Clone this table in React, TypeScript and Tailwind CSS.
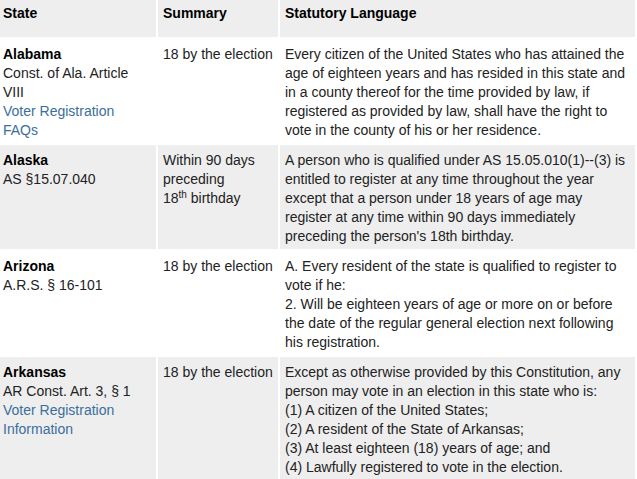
import React from "react";

type Row = {
  state: string;
  cites: string[];
  links: string[];
  summary: React.ReactNode;
  language: string[];
  shaded: boolean;
};

const rows: Row[] = [
  {
    state: "Alabama",
    cites: ["Const. of Ala. Article VIII"],
    links: ["Voter Registration FAQs"],
    summary: "18 by the election",
    language: [
      "Every citizen of the United States who has attained the age of eighteen years and has resided in this state and in a county thereof for the time provided by law, if registered as provided by law, shall have the right to vote in the county of his or her residence.",
    ],
    shaded: false,
  },
  {
    state: "Alaska",
    cites: ["AS §15.07.040"],
    links: [],
    summary: (
      <>
        Within 90 days
        <br />
        preceding
        <br />
        18<sup className="text-[10px]">th</sup> birthday
      </>
    ),
    language: [
      "A person who is qualified under AS 15.05.010(1)--(3) is entitled to register at any time throughout the year except that a person under 18 years of age may register at any time within 90 days immediately preceding the person's 18th birthday.",
    ],
    shaded: true,
  },
  {
    state: "Arizona",
    cites: ["A.R.S. § 16-101"],
    links: [],
    summary: "18 by the election",
    language: [
      "A. Every resident of the state is qualified to register to vote if he:",
      "2. Will be eighteen years of age or more on or before the date of the regular general election next following his registration.",
    ],
    shaded: false,
  },
  {
    state: "Arkansas",
    cites: ["AR Const. Art. 3, § 1"],
    links: ["Voter Registration Information"],
    summary: "18 by the election",
    language: [
      "Except as otherwise provided by this Constitution, any person may vote in an election in this state who is:",
      "(1) A citizen of the United States;",
      "(2) A resident of the State of Arkansas;",
      "(3) At least eighteen (18) years of age; and",
      "(4) Lawfully registered to vote in the election.",
    ],
    shaded: true,
  },
];

const App: React.FC = () => {
  return (
    <div className="w-[637px] h-[479px] overflow-hidden bg-white font-['Liberation_Sans',Arial,sans-serif] text-[14px] leading-[19px] text-[#222]">
      <div className="grid grid-cols-[156px_120px_355px] gap-[2px]">
        {/* header */}
        <div className="bg-[#eeeeee] h-[37px] pt-[4px] pl-[3px] pr-[5px] font-bold text-black">State</div>
        <div className="bg-[#eeeeee] h-[37px] pt-[4px] px-[5px] font-bold text-black">Summary</div>
        <div className="bg-[#eeeeee] h-[37px] pt-[4px] px-[5px] font-bold text-black">Statutory Language</div>

        {rows.map((row) => {
          const bg = row.shaded ? "bg-[#eeeeee]" : "bg-white";
          return (
            <React.Fragment key={row.state}>
              <div className={`${bg} pt-[6px] pb-[3px] pl-[3px] pr-[5px]`}>
                <div className="font-bold text-black">{row.state}</div>
                {row.cites.map((c) => (
                  <div key={c}>{c}</div>
                ))}
                {row.links.map((l) => (
                  <a key={l} href="#" className="block text-[#3b6e9c]">
                    {l}
                  </a>
                ))}
              </div>
              <div className={`${bg} pt-[6px] pb-[3px] px-[5px]`}>{row.summary}</div>
              <div className={`${bg} pt-[6px] pb-[3px] px-[5px]`}>
                {row.language.map((p, i) => (
                  <div key={i}>{p}</div>
                ))}
              </div>
            </React.Fragment>
          );
        })}
      </div>
    </div>
  );
};

export default App;
